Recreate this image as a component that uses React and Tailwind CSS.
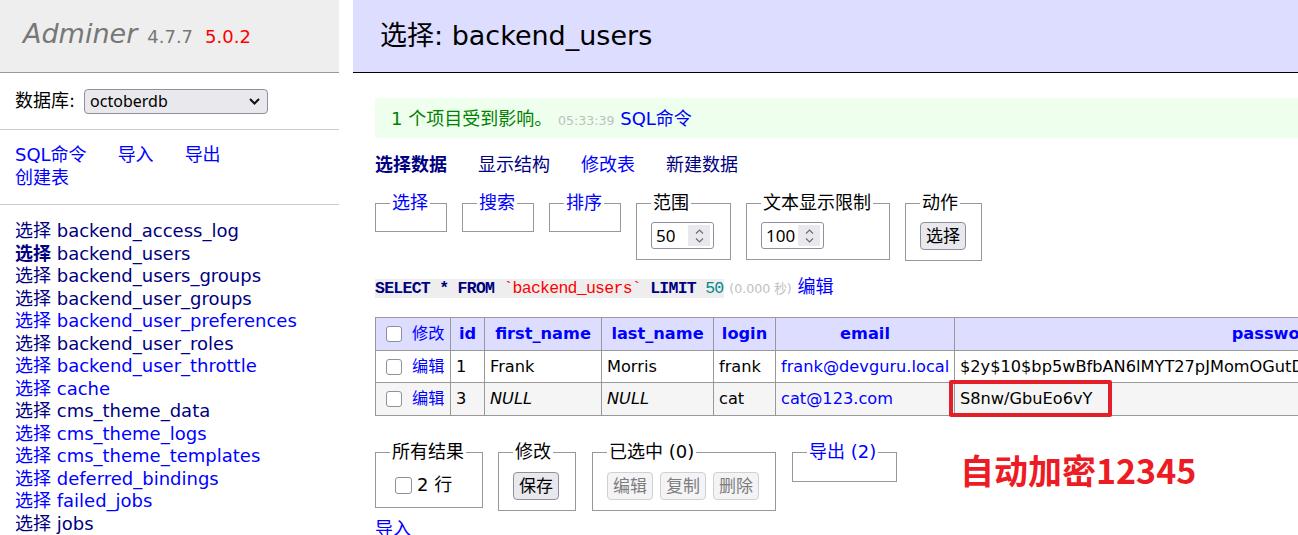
import React from "react";

function Chk({ big }) {
  return (
    <span
      className={
        big
          ? "inline-block w-[17px] h-[17px] border border-[#8f8f9d] rounded-[3px] bg-white shrink-0"
          : "inline-block w-[16px] h-[16px] border border-[#8f8f9d] rounded-[3px] bg-white shrink-0"
      }
    />
  );
}

function Spin() {
  return (
    <div className="self-stretch w-[22px] bg-[#e9e9ed] flex flex-col items-center justify-center gap-[4px]">
      <svg width="9" height="5" viewBox="0 0 9 5">
        <path d="M1 4.5 L4.5 1 L8 4.5" stroke="#6d6d75" strokeWidth="1.2" fill="none" />
      </svg>
      <svg width="9" height="5" viewBox="0 0 9 5">
        <path d="M1 0.5 L4.5 4 L8 0.5" stroke="#6d6d75" strokeWidth="1.2" fill="none" />
      </svg>
    </div>
  );
}

function NumInput({ value }) {
  return (
    <div className="w-[63px] h-[27px] border border-[#8f8f9d] rounded-[3px] bg-white flex items-center justify-between pl-[4px] pr-[3px] py-[2px]">
      <span className="leading-[22px] text-[17px] font-['Noto_Sans',sans-serif]">{value}</span>
      <Spin />
    </div>
  );
}

function Btn({ children, disabled }) {
  return (
    <div
      className={
        disabled
          ? "w-[46px] h-[28px] rounded-[4px] border border-[#cfcfd4] bg-[#f4f4f6] text-[#7d7d7d] flex items-center justify-center text-[17px] leading-[22px]"
          : "w-[46px] h-[28px] rounded-[4px] border border-[#8f8f9d] bg-[#e9e9ed] text-black flex items-center justify-center text-[17px] leading-[22px]"
      }
    >
      {children}
    </div>
  );
}

const tables = [
  ["backend_access_log", true],
  ["backend_users", true, true],
  ["backend_users_groups", true],
  ["backend_user_groups", true],
  ["backend_user_preferences", false],
  ["backend_user_roles", true],
  ["backend_user_throttle", false],
  ["cache", false],
  ["cms_theme_data", true],
  ["cms_theme_logs", false],
  ["cms_theme_templates", false],
  ["deferred_bindings", false],
  ["failed_jobs", false],
  ["jobs", true],
];

export default function App() {
  return (
    <div className="w-[1298px] h-[535px] overflow-hidden bg-white text-black text-[18px] font-['DejaVu_Sans','Noto_Sans_CJK_SC',sans-serif] flex">
      {/* Sidebar */}
      <aside className="w-[339px] shrink-0">
        <div className="h-[73px] bg-[#eeeeee] border-b border-[#999999] pl-[23px] pt-[18px] leading-[31px] whitespace-nowrap">
          <span className="text-[27px] italic text-[#777777]">Adminer</span>
          <span className="ml-[10px] text-[18px] text-[#777777]">4.7.7</span>
          <span className="ml-[12px] text-[18px] text-[#ff0000]">5.0.2</span>
        </div>
        <div className="h-[57px] border-b border-[#cccccc] flex items-center pl-[15px]">
          <span className="leading-[22px] whitespace-nowrap">数据库:</span>
          <div className="ml-[9px] w-[184px] h-[25px] bg-[#e9e9ed] border border-[#8f8f9d] rounded-[4px] flex items-center justify-between pl-[5px] pr-[7px]">
            <span className="leading-[20px] text-[16px] font-['Noto_Sans',sans-serif]">octoberdb</span>
            <svg width="11" height="7" viewBox="0 0 11 7">
              <path d="M1 1 L5.5 5.5 L10 1" stroke="#111" strokeWidth="2" fill="none" />
            </svg>
          </div>
        </div>
        <div className="h-[75px] border-b border-[#cccccc] pl-[15px] pt-[13px] leading-[23px] text-[#0000ff]">
          <div className="flex gap-[31px] whitespace-nowrap">
            <a>SQL命令</a>
            <a>导入</a>
            <a>导出</a>
          </div>
          <div>
            <a>创建表</a>
          </div>
        </div>
        <div className="pl-[15px] pt-[15px] leading-[22.5px]">
          {tables.map(([name, visited, active]) => (
            <div
              key={name}
              className={visited ? "whitespace-nowrap text-[#000080]" : "whitespace-nowrap text-[#0000ff]"}
            >
              <span className={active ? "font-bold" : ""}>选择</span> {name}
            </div>
          ))}
        </div>
      </aside>

      {/* Main */}
      <main className="ml-[14px] flex-1 min-w-0 relative">
        <div className="h-[73px] bg-[#ddddff] border-b border-black flex items-center pl-[27px] text-[27px] leading-[32px] whitespace-nowrap">
          选择: backend_users
        </div>
        <div className="pl-[22px]">
          <div className="mt-[25px] h-[40px] bg-[#eeffee] pl-[16px] pt-[10px] leading-[22px] whitespace-nowrap text-[#008000]">
            1 个项目受到影响。 <span className="text-[12.6px] text-[#c0c0c0]">05:33:39</span>{" "}
            <a className="text-[#0000ff]">SQL命令</a>
          </div>

          <div className="mt-[16px] flex gap-[31px] leading-[22px] whitespace-nowrap">
            <a className="font-bold text-[#000080]">选择数据</a>
            <a className="text-[#000080]">显示结构</a>
            <a className="text-[#0000ff]">修改表</a>
            <a className="text-[#000080]">新建数据</a>
          </div>

          <div className="mt-[16px] flex items-start gap-[15px] whitespace-nowrap">
            <fieldset className="w-[72px] border border-[#999999] px-[14px] pt-[9px] pb-[8px]">
              <legend className="px-[2px] leading-[22px] text-[#0000ff]">选择</legend>
            </fieldset>
            <fieldset className="w-[72px] border border-[#999999] px-[14px] pt-[9px] pb-[8px]">
              <legend className="px-[2px] leading-[22px] text-[#0000ff]">搜索</legend>
            </fieldset>
            <fieldset className="w-[72px] border border-[#999999] px-[14px] pt-[9px] pb-[8px]">
              <legend className="px-[2px] leading-[22px] text-[#0000ff]">排序</legend>
            </fieldset>
            <fieldset className="w-[95px] border border-[#999999] px-[14px] pt-[8px] pb-[10px]">
              <legend className="px-[2px] leading-[22px]">范围</legend>
              <NumInput value="50" />
            </fieldset>
            <fieldset className="w-[144px] border border-[#999999] px-[14px] pt-[8px] pb-[10px]">
              <legend className="px-[2px] leading-[22px]">文本显示限制</legend>
              <NumInput value="100" />
            </fieldset>
            <fieldset className="w-[77px] border border-[#999999] px-[14px] pt-[8px] pb-[10px]">
              <legend className="px-[2px] leading-[22px]">动作</legend>
              <Btn>选择</Btn>
            </fieldset>
          </div>

          <div className="mt-[15px] leading-[22px] whitespace-nowrap">
            <code className="bg-[#eeeeee] font-['Liberation_Mono',monospace] text-[16.5px] tracking-[-0.73px] text-[#000080]">
              <b>SELECT</b> <b>*</b> <b>FROM</b> <span className="text-[#ff0000]">`backend_users`</span>{" "}
              <b>LIMIT</b> <span className="text-[#008b8b]">50</span>
            </code>{" "}
            <span className="text-[12.6px] text-[#c0c0c0]">(0.000 秒)</span>{" "}
            <a className="text-[#0000ff]">编辑</a>
          </div>

          <table className="mt-[17px] border-collapse table-fixed w-[1221px] text-[16.2px] leading-[20px]">
            <colgroup>
              <col className="w-[75px]" />
              <col className="w-[34px]" />
              <col className="w-[117px]" />
              <col className="w-[112px]" />
              <col className="w-[62px]" />
              <col className="w-[179px]" />
              <col className="w-[642px]" />
            </colgroup>
            <thead>
              <tr className="h-[33px] bg-[#ddddff]">
                <td className="border border-[#999999] px-[5px]">
                  <div className="flex items-center whitespace-nowrap">
                    <span className="ml-[5px] mr-[10px] flex">
                      <Chk />
                    </span>
                    <a className="text-[#0000ff]">修改</a>
                  </div>
                </td>
                <th className="border border-[#999999] px-[5px] font-bold text-[#0000ff] whitespace-nowrap">id</th>
                <th className="border border-[#999999] px-[5px] font-bold text-[#0000ff] whitespace-nowrap">first_name</th>
                <th className="border border-[#999999] px-[5px] font-bold text-[#0000ff] whitespace-nowrap">last_name</th>
                <th className="border border-[#999999] px-[5px] font-bold text-[#0000ff] whitespace-nowrap">login</th>
                <th className="border border-[#999999] px-[5px] font-bold text-[#0000ff] whitespace-nowrap">email</th>
                <th className="border border-[#999999] px-[5px] font-bold text-[#0000ff] whitespace-nowrap">password</th>
              </tr>
            </thead>
            <tbody>
              <tr className="h-[32px] bg-white">
                <td className="border border-[#999999] px-[5px]">
                  <div className="flex items-center whitespace-nowrap">
                    <span className="ml-[5px] mr-[10px] flex">
                      <Chk />
                    </span>
                    <a className="text-[#0000ff]">编辑</a>
                  </div>
                </td>
                <td className="border border-[#999999] px-[5px] whitespace-nowrap">1</td>
                <td className="border border-[#999999] px-[5px] whitespace-nowrap">Frank</td>
                <td className="border border-[#999999] px-[5px] whitespace-nowrap">Morris</td>
                <td className="border border-[#999999] px-[5px] whitespace-nowrap">frank</td>
                <td className="border border-[#999999] px-[5px] whitespace-nowrap">
                  <a className="text-[#0000ff]">frank@devguru.local</a>
                </td>
                <td className="border border-[#999999] px-[5px] whitespace-nowrap overflow-hidden">
                  $2y$10$bp5wBfbAN6lMYT27pJMomOGutDF2ZSD8b0z1mJ3Zv0iFUqbUpWcLG
                </td>
              </tr>
              <tr className="h-[33px] bg-[#f5f5f5]">
                <td className="border border-[#999999] px-[5px]">
                  <div className="flex items-center whitespace-nowrap">
                    <span className="ml-[5px] mr-[10px] flex">
                      <Chk />
                    </span>
                    <a className="text-[#0000ff]">编辑</a>
                  </div>
                </td>
                <td className="border border-[#999999] px-[5px] whitespace-nowrap">3</td>
                <td className="border border-[#999999] px-[5px] whitespace-nowrap italic">NULL</td>
                <td className="border border-[#999999] px-[5px] whitespace-nowrap italic">NULL</td>
                <td className="border border-[#999999] px-[5px] whitespace-nowrap">cat</td>
                <td className="border border-[#999999] px-[5px] whitespace-nowrap">
                  <a className="text-[#0000ff]">cat@123.com</a>
                </td>
                <td className="border border-[#999999] px-[5px] whitespace-nowrap">S8nw/GbuEo6vY</td>
              </tr>
            </tbody>
          </table>

          <div className="mt-[25px] flex items-start whitespace-nowrap">
            <fieldset className="w-[108px] border border-[#999999] px-[14px] pt-[9px] pb-[9px]">
              <legend className="px-[2px] leading-[22px]">所有结果</legend>
              <div className="h-[26px] flex items-center leading-[22px]">
                <span className="ml-[5px] mr-[5px] flex">
                  <Chk big />
                </span>
                2 行
              </div>
            </fieldset>
            <fieldset className="ml-[15px] w-[78px] border border-[#999999] px-[14px] pt-[9px] pb-[10px]">
              <legend className="px-[2px] leading-[22px]">修改</legend>
              <Btn>保存</Btn>
            </fieldset>
            <fieldset className="ml-[16px] w-[184px] border border-[#999999] px-[14px] pt-[9px] pb-[10px]">
              <legend className="px-[2px] leading-[22px]">已选中 (0)</legend>
              <div className="flex gap-[7px]">
                <Btn disabled>编辑</Btn>
                <Btn disabled>复制</Btn>
                <Btn disabled>删除</Btn>
              </div>
            </fieldset>
            <fieldset className="ml-[16px] w-[105px] border border-[#999999] px-[14px] pt-[9px] pb-[9px]">
              <legend className="px-[2px] leading-[22px] text-[#0000ff]">导出 (2)</legend>
            </fieldset>
          </div>

          <div className="mt-[7px] leading-[22px] text-[#0000ff]">
            <a>导入</a>
          </div>
        </div>

        {/* annotations */}
        <div className="absolute left-[596px] top-[380px] w-[163px] h-[37px] border-[4px] border-[#e3202a] rounded-[2px]" />
        <div className="absolute left-[607px] top-[450px] text-[34px] font-bold leading-[40px] text-[#ed1c24] whitespace-nowrap font-['Noto_Sans_CJK_SC',sans-serif]">
          自动加密12345
        </div>
      </main>
    </div>
  );
}
